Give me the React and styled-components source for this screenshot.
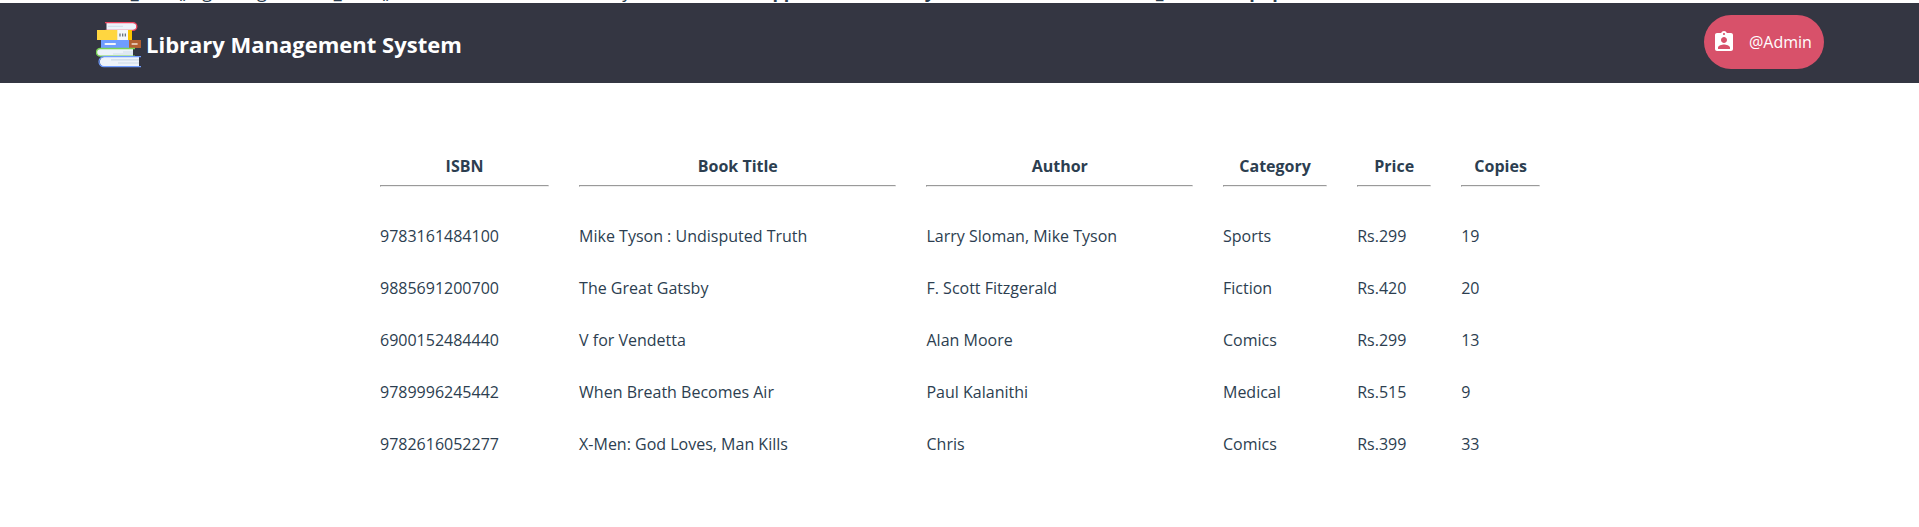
import React from "react";
import styled, { createGlobalStyle } from "styled-components";
import { MdAssignmentInd } from "react-icons/md";

const GlobalStyle = createGlobalStyle`
  * { box-sizing: border-box; }
  body {
    margin: 0;
    background: #fff;
    color: #2c3e50;
    font-family: "Open Sans", sans-serif;
    font-size: 16px;
    line-height: 22px;
  }
`;

const Page = styled.div`
  height: 527px;
  overflow: hidden;
`;

const Notice = styled.div`
  height: 3px;
  display: flex;
  align-items: flex-end;
  overflow: hidden;
  white-space: pre;
  font-size: 18px;
  line-height: 25px;
`;

const NoticeText = styled.p`
  margin: 0 0 -1px;
`;

const Header = styled.header`
  height: 80px;
  padding: 0 95px 0 96px;
  display: flex;
  justify-content: space-between;
  align-items: flex-start;
  background: #343642;
`;

const Brand = styled.div`
  display: flex;
  align-items: flex-start;
  padding-top: 19px;
  gap: 4px;
`;

const Title = styled.h1`
  margin: 6px 0 0;
  color: #fff;
  font-size: 22px;
  line-height: 33px;
  font-weight: 700;
`;

const UserButton = styled.button`
  width: 120px;
  height: 54px;
  margin-top: 12px;
  padding: 0 0 0 8px;
  border: 0;
  border-radius: 27px;
  display: flex;
  align-items: center;
  gap: 13px;
  background: #d8516a;
  color: #fff;
  font: 16px/22px "Open Sans", sans-serif;
`;

const Table = styled.table`
  width: 1190px;
  margin: 61px 0 0 365px;
  border-collapse: collapse;
  table-layout: fixed;
`;

const Col = styled.col`
  width: ${(p) => p.$w}px;
`;

const HeadCell = styled.th`
  height: 66px;
  padding: 11px 15px 0;
  vertical-align: top;
  font-weight: 700;
`;

const Rule = styled.hr`
  margin: 8px 0 0;
`;

const Cell = styled.td`
  height: 52px;
  padding: 0 15px;
  white-space: nowrap;
`;

const columns = [
  ["ISBN", 199.1],
  ["Book Title", 347.4],
  ["Author", 296.5],
  ["Category", 134.2],
  ["Price", 104],
  ["Copies", 108.8],
];

const books = [
  ["9783161484100", "Mike Tyson : Undisputed Truth", "Larry Sloman, Mike Tyson", "Sports", "Rs.299", "19"],
  ["9885691200700", "The Great Gatsby", "F. Scott Fitzgerald", "Fiction", "Rs.420", "20"],
  ["6900152484440", "V for Vendetta", "Alan Moore", "Comics", "Rs.299", "13"],
  ["9789996245442", "When Breath Becomes Air", "Paul Kalanithi", "Medical", "Rs.515", "9"],
  ["9782616052277", "X-Men: God Loves, Man Kills", "Chris", "Comics", "Rs.399", "33"],
];

function BooksLogo() {
  return (
    <svg width="46" height="46" viewBox="0 0 46 46" aria-hidden="true">
      <path d="M10.5 1H37a3.5 3.5 0 0 1 0 7H10.5Z" fill="#edf3fa" />
      <path d="M9 .7H37a3.8 3.8 0 0 1 0 7.6H9" fill="none" stroke="#f0455f" strokeWidth="1.3" />
      <path d="M12 4.3H27" stroke="#cfdce8" />
      <path d="M1 8H36V18H1Z" fill="#ffd640" />
      <path d="M32 8H36V18H32Z" fill="#fbc500" />
      <path d="M21.3 8H32V18H21.3Z" fill="#f3f7fb" />
      <path d="M24 11.5V14.5M26.7 11.5V14.5M29.3 11.5V14.5" stroke="#5b6673" strokeWidth="1.2" />
      <path d="M5 18H33V26H5Z" fill="#6f9dff" />
      <path d="M9.5 22H19" stroke="#f3f7fb" strokeWidth="2" strokeLinecap="round" />
      <path d="M33 18H45V26H33Z" fill="#b26032" />
      <path d="M36.2 22H41" stroke="#f0dfd4" strokeWidth="1.6" strokeLinecap="round" />
      <path d="M37 26.7H4.3a3.6 3.6 0 0 0 0 7.3H37Z" fill="#edf3fa" />
      <path d="M39 26.5H4.3a3.8 3.8 0 0 0 0 7.6H39" fill="none" stroke="#79d455" strokeWidth="1.4" />
      <path d="M27 30H37M17 32H37" stroke="#d2deea" strokeWidth="1.2" />
      <path d="M43 35H8a4.8 4.8 0 0 0 0 9.5H43Z" fill="#edf3fa" />
      <path d="M45 34.7H8a5 5 0 0 0 0 10H45" fill="none" stroke="#6f9dff" strokeWidth="1.2" />
      <path d="M15 37.8H43M22 41H43" stroke="#cbd9e6" strokeWidth="1.2" />
    </svg>
  );
}

export default function App() {
  return (
    <Page>
      <GlobalStyle />
      <Notice>
        <NoticeText>
          <b>Notice</b>
          {": session_start(): Ignoring session_start() because a session is already active in "}
          <b>{"C:\\xampp\\htdocs\\Library\\member\\books\\readers_numbers.php"}</b>
          {" on line "}
          <b>2</b>
        </NoticeText>
      </Notice>
      <Header>
        <Brand>
          <BooksLogo />
          <Title>Library Management System</Title>
        </Brand>
        <UserButton>
          <MdAssignmentInd size={24} />
          @Admin
        </UserButton>
      </Header>
      <Table>
        <colgroup>
          {columns.map(([name, w]) => (
            <Col key={name} $w={w} />
          ))}
        </colgroup>
        <thead>
          <tr>
            {columns.map(([name]) => (
              <HeadCell key={name}>
                {name}
                <Rule />
              </HeadCell>
            ))}
          </tr>
        </thead>
        <tbody>
          {books.map((book) => (
            <tr key={book[0]}>
              {book.map((value, i) => (
                <Cell key={i}>{value}</Cell>
              ))}
            </tr>
          ))}
        </tbody>
      </Table>
    </Page>
  );
}
